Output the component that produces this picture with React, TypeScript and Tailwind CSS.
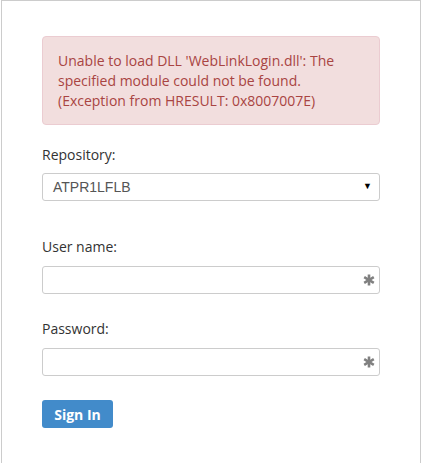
import React from "react";

function Star() {
  return (
    <svg width="12" height="12" viewBox="0 0 12 12" className="shrink-0">
      <g stroke="#808080" strokeWidth="2.6" strokeLinecap="butt">
        <line x1="6" y1="0.5" x2="6" y2="11.5" />
        <line x1="1.2" y1="3.2" x2="10.8" y2="8.8" />
        <line x1="1.2" y1="8.8" x2="10.8" y2="3.2" />
      </g>
    </svg>
  );
}

function Field({ label, mt }: { label: string; mt: string }) {
  return (
    <div className={`flex flex-col ${mt}`}>
      <div className="text-[14px] leading-[20px] text-[#333333]">{label}</div>
      <div className="mt-[9px] flex h-[28px] items-center justify-end rounded-[3px] border border-[#cccccc] bg-white pr-[4px]">
        <Star />
      </div>
    </div>
  );
}

export default function App() {
  return (
    <div className="w-[422px] h-[463px] bg-white overflow-hidden" style={{ fontFamily: '"Open Sans", sans-serif' }}>
      <div className="mx-[1px] flex h-[470px] flex-col border border-b-0 border-[#cccccc] bg-white px-[40px] pt-[35px]">
        <div className="rounded-[4px] border border-[#ebccd1] bg-[#f2dede] px-[15px] pt-[14px] pb-[13px] text-[14px] leading-[20px] text-[#a94442]">
          Unable to load DLL 'WebLinkLogin.dll': The specified module could not be found. (Exception from HRESULT: 0x8007007E)
        </div>
        <div className="mt-[20px] flex flex-col">
          <div className="text-[14px] leading-[20px] text-[#333333]">Repository:</div>
          <div
            className="mt-[8px] flex h-[28px] items-center justify-between rounded-[3px] border border-[#cccccc] bg-white pl-[10px] pr-[7px] text-[14px] text-[#555555]"
            style={{ fontFamily: '"Liberation Sans", Arial, sans-serif' }}
          >
            <span>ATPR1LFLB</span>
            <span className="text-[9px] text-black">▼</span>
          </div>
        </div>
        <Field label="User name:" mt="mt-[36px]" />
        <Field label="Password:" mt="mt-[25px]" />
        <div className="mt-[24px] flex">
          <button className="flex h-[28px] w-[71px] items-center justify-center rounded-[3px] bg-[#428bca] text-[14px] font-bold text-white">
            Sign In
          </button>
        </div>
      </div>
    </div>
  );
}
